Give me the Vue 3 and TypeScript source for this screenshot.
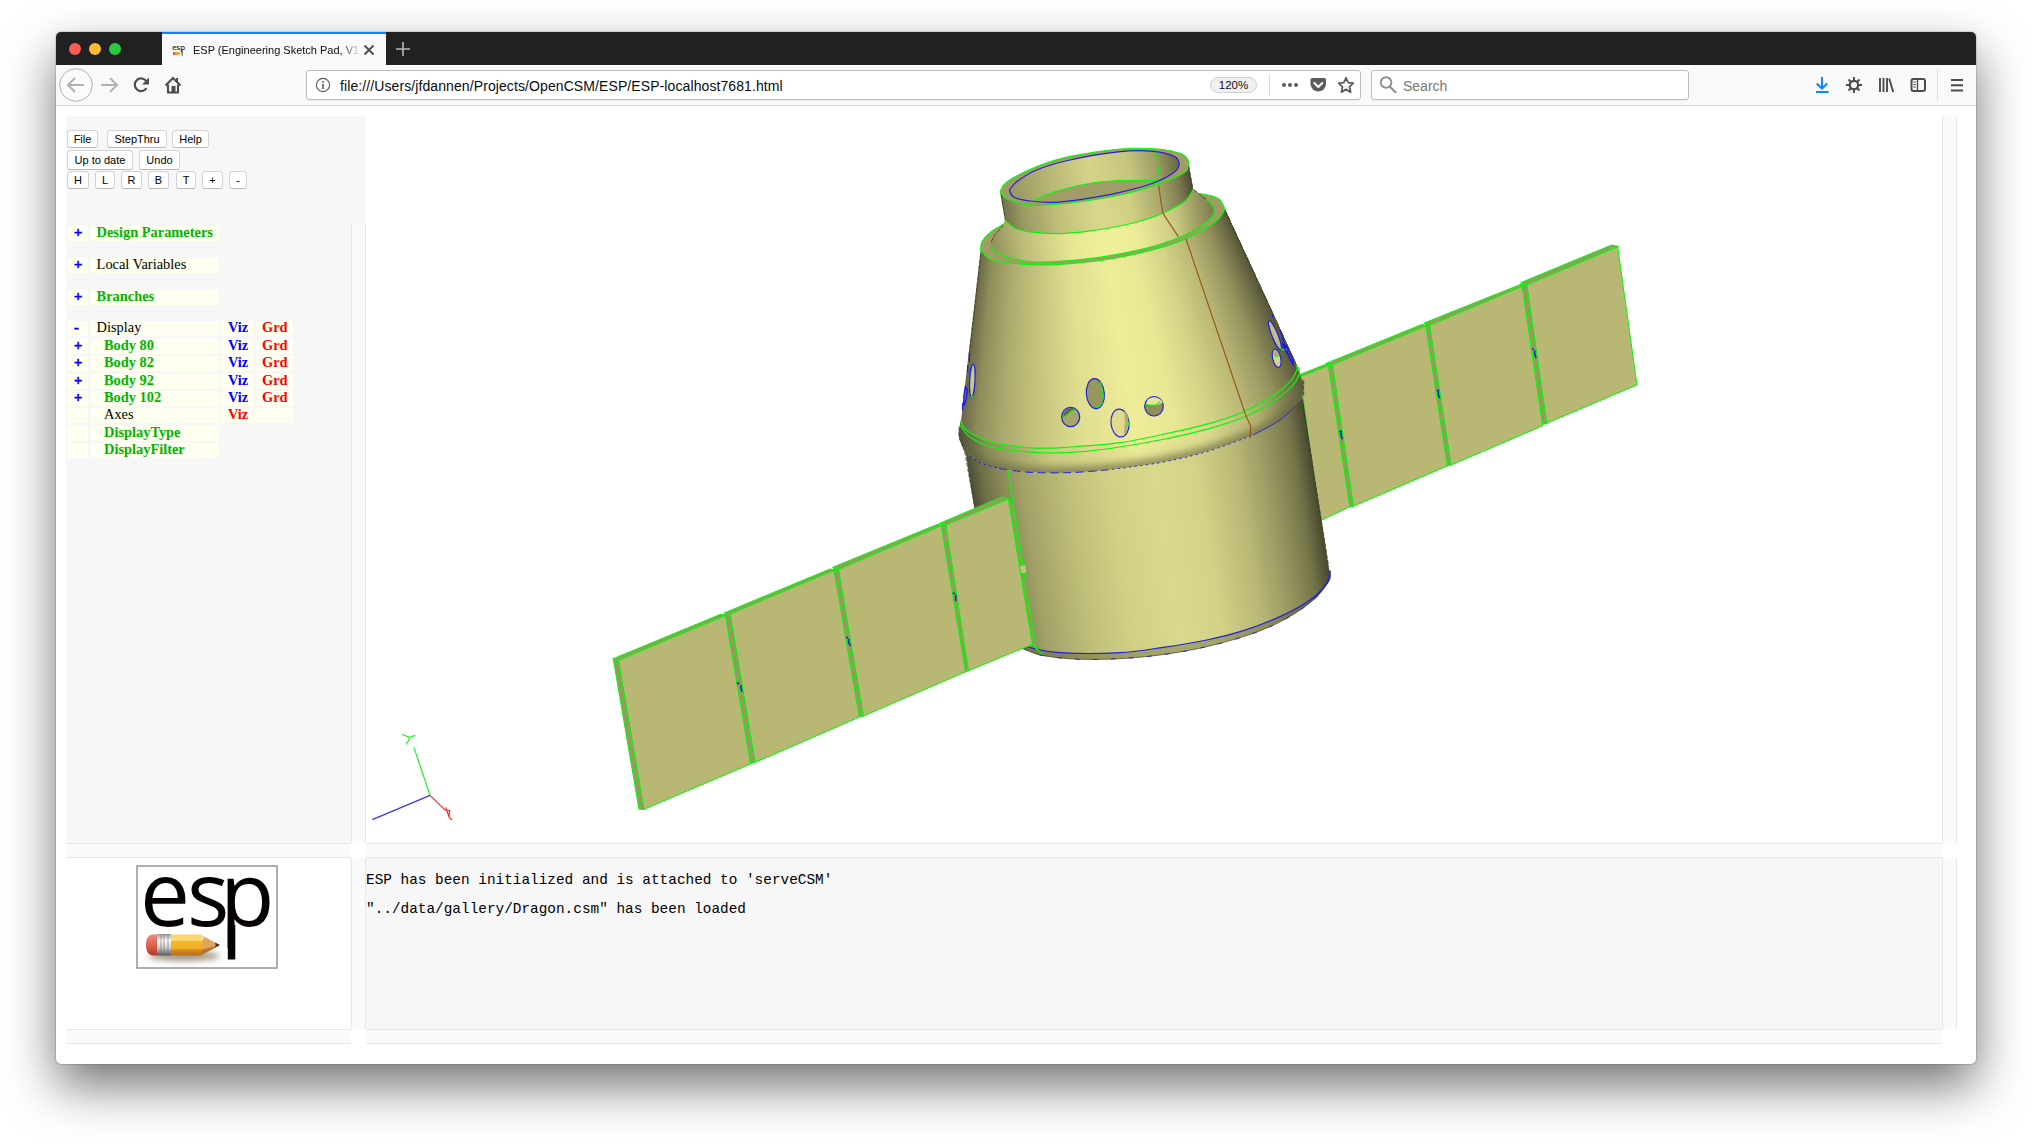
<script setup lang="ts">
type Pt = [number, number]

interface Row {
  sign: string
  label: string
  link?: boolean
  indent?: boolean
  group?: boolean
  viz?: string
  grd?: boolean
}

const buttonRows: { cls: string; items: { t: string; w: number; gap: number }[] }[] = [
  { cls: 'r1', items: [{ t: 'File', w: 31, gap: 0 }, { t: 'StepThru', w: 60, gap: 9 }, { t: 'Help', w: 37, gap: 5 }] },
  { cls: 'r2', items: [{ t: 'Up to date', w: 66, gap: 0 }, { t: 'Undo', w: 41, gap: 6 }] },
  {
    cls: 'r3',
    items: [
      { t: 'H', w: 22, gap: 0 }, { t: 'L', w: 20, gap: 6 }, { t: 'R', w: 21, gap: 6 }, { t: 'B', w: 21, gap: 6 },
      { t: 'T', w: 20, gap: 7 }, { t: '+', w: 21, gap: 6 }, { t: '-', w: 18, gap: 6 },
    ],
  },
]

const rows: Row[] = [
  { sign: '+', label: 'Design Parameters', link: true },
  { sign: '+', label: 'Local Variables', group: true },
  { sign: '+', label: 'Branches', link: true, group: true },
  { sign: '-', label: 'Display', group: true, viz: 'on', grd: true },
  { sign: '+', label: 'Body 80', link: true, indent: true, viz: 'on', grd: true },
  { sign: '+', label: 'Body 82', link: true, indent: true, viz: 'on', grd: true },
  { sign: '+', label: 'Body 92', link: true, indent: true, viz: 'on', grd: true },
  { sign: '+', label: 'Body 102', link: true, indent: true, viz: 'on', grd: true },
  { sign: '', label: 'Axes', indent: true, viz: 'off' },
  { sign: '', label: 'DisplayType', link: true, indent: true },
  { sign: '', label: 'DisplayFilter', link: true, indent: true },
]

// Smooth path through a list of points (Catmull-Rom to cubic Bezier)
function segs(p: Pt[]): string {
  let d = ''
  for (let i = 0; i < p.length - 1; i++) {
    const a = p[Math.max(0, i - 1)], b = p[i], c = p[i + 1], e = p[Math.min(p.length - 1, i + 2)]
    d += `C${(b[0] + (c[0] - a[0]) / 6).toFixed(1)} ${(b[1] + (c[1] - a[1]) / 6).toFixed(1)} ${(c[0] - (e[0] - b[0]) / 6).toFixed(1)} ${(c[1] - (e[1] - b[1]) / 6).toFixed(1)} ${c[0]} ${c[1]}`
  }
  return d
}
const curve = (p: Pt[]) => `M${p[0][0]} ${p[0][1]}` + segs(p)
const join = (...parts: Pt[][]) =>
  parts.map((p, i) => `${i ? 'L' : 'M'}${p[0][0]} ${p[0][1]}` + segs(p)).join('') + 'Z'
const rev = (p: Pt[]) => [...p].reverse()

const rimTopBack: Pt[] = [[240, 185], [262, 155], [350, 110], [450, 79], [600, 57], [715, 57], [780, 70], [802, 86], [806, 103]]
const rimTopFront: Pt[] = [[806, 103], [795, 126], [720, 160], [600, 195], [450, 219], [340, 226], [262, 207], [240, 185]]
const boreBack: Pt[] = [[268, 180], [290, 155], [350, 120], [450, 90], [600, 65], [700, 64], [765, 80], [778, 103]]
const boreFront: Pt[] = [[778, 103], [765, 125], [700, 159], [600, 187], [480, 209], [400, 217], [330, 213], [282, 202], [268, 180]]
const floorArc: Pt[] = [[342, 212], [400, 187], [500, 162], [600, 152], [722, 151]]
const neckBase: Pt[] = [[255, 270], [290, 297], [350, 308], [420, 311], [500, 304], [600, 288], [700, 261], [790, 217], [820, 178]]
const shoulderIn: Pt[] = [[250, 285], [222, 318], [212, 345], [230, 368], [280, 387], [350, 396], [450, 392], [570, 377], [700, 349], [800, 313], [870, 267], [883, 240], [868, 215], [820, 178]]
const shoulderFront: Pt[] = [[182, 360], [210, 387], [270, 399], [365, 405], [450, 401], [570, 387], [700, 359], [800, 325], [885, 276], [912, 243], [914, 236]]
const shoulderLeft: Pt[] = [[182, 362], [186, 335], [210, 308], [252, 282]]
const shoulderRight: Pt[] = [[914, 236], [900, 210], [872, 197], [832, 190]]
const ringIn: Pt[] = [[122, 872], [132, 893], [160, 915], [220, 938], [340, 954], [450, 951], [600, 938], [720, 915], [870, 880], [970, 846], [1060, 797], [1110, 755], [1130, 722], [1130, 705]]
const ringOut: Pt[] = [[120, 885], [150, 921], [210, 950], [340, 967], [450, 967], [560, 957], [720, 930], [870, 895], [980, 858], [1060, 815], [1115, 770], [1138, 732], [1134, 710]]
const ringBase: Pt[] = [[136, 968], [180, 998], [240, 1016], [330, 1027], [450, 1028], [560, 1020], [720, 998], [860, 965], [1000, 915], [1080, 870], [1146, 810]]
const baseOut: Pt[] = [[308, 1555], [360, 1575], [460, 1587], [580, 1587], [720, 1575], [860, 1550], [1000, 1510], [1100, 1465], [1180, 1410], [1225, 1355], [1230, 1322]]
const baseIn: Pt[] = [[323, 1551], [420, 1568], [600, 1568], [730, 1552], [860, 1530], [970, 1502], [1080, 1460], [1170, 1410], [1220, 1360], [1230, 1322]]

const conePath = join([[182, 360], [127, 840], [122, 872]], ringIn, [[1130, 705], [914, 236]], rev(shoulderFront))
const neckPath = join([[240, 185], [255, 270]], neckBase, [[820, 178], [806, 103]], rimTopFront)
const shoulderPath = join(neckBase, rev(shoulderIn))
const rimPath = join(shoulderLeft, [[252, 282], [832, 190]], rev(shoulderRight), rev(shoulderFront))
const ringPath = join([[122, 872], [117, 920], [136, 968]], ringBase, [[1146, 810], [1151, 765], [1140, 735], [1130, 705]], rev(ringIn))
const bodyPath = join([[136, 960], [166, 1150], [235, 1520], [308, 1555]], baseOut, [[1230, 1322], [1226, 1310], [1148, 800]], rev(ringBase))

// Shaded cone: thin wedges between the two slanted silhouettes
const stops: [number, number[]][] = [
  [0, [104, 103, 70]], [0.05, [142, 141, 91]], [0.13, [172, 171, 110]], [0.23, [197, 196, 126]],
  [0.36, [225, 223, 144]], [0.5, [238, 236, 153]], [0.61, [232, 231, 148]], [0.71, [212, 211, 135]],
  [0.81, [184, 183, 117]], [0.9, [148, 147, 94]], [0.96, [112, 111, 72]], [1, [84, 84, 56]],
]
function shade(t: number): string {
  let i = 1
  while (i < stops.length - 1 && stops[i][0] < t) i++
  const [t0, c0] = stops[i - 1], [t1, c1] = stops[i]
  const k = Math.min(1, Math.max(0, (t - t0) / (t1 - t0)))
  return `rgb(${c0.map((v, j) => Math.round(v + (c1[j] - v) * k)).join(',')})`
}
const N = 130
const wedges = Array.from({ length: N }, (_, i) => {
  const at = (t: number, s: number): string => {
    const tx = 182 + 733 * t, ty = 362 - 125 * t
    const bx = 124 + 1010 * t, by = 880 - 165 * t
    return `${(tx + (bx - tx) * s).toFixed(1)},${(ty + (by - ty) * s).toFixed(1)}`
  }
  const t = i === 0 ? -0.08 : i / N
  return { pts: [at(t, -0.4), at(1.08, -0.4), at(1.08, 1.4), at(t, 1.4)].join(' '), fill: shade((i + 0.5) / N) }
})

const leftWing = {
  faces: ['55,600 378,465 452,912 132,1048', '390,460 705,328 779,771 465,907', '715,327 1025,195 1097,635 790,768', '1037,194 1225,117 1297,553 1105,632'],
  sides: ['40,597 55,600 132,1049 117,1047', '375,460 390,460 465,907 452,910', '701,326 715,326 790,768 778,770', '1023,193 1037,193 1105,632 1097,635'],
  tops: ['40,596 362,463 378,465 55,601', '375,458 690,327 705,329 390,462', '699,322 1013,193 1026,196 715,328', '1020,190 1205,111 1225,116 1037,195'],
  marks: ['M410 670h8M423 675v10l3 10', 'M738 533h6M746 536v10l5 12', 'M1058 400h7M1067 404v20'],
}
const rightWing = {
  faces: ['120,440 205,405 270,830 180,872', '217,404 500,285 565,706 280,829', '508,284 787,168 848,587 573,705', '800,164 1073,50 1131,465 860,580'],
  sides: ['205,402 217,402 280,829 270,830', '497,284 508,282 573,705 562,707', '786,162 800,162 860,580 848,583'],
  tops: ['118,434 200,402 212,404 122,440', '200,400 485,284 502,286 217,404', '493,279 783,163 790,167 508,286', '783,158 1055,45 1073,49 800,164'],
  marks: ['M238 604h5v12l4 12', 'M530 481h5v12l4 12', 'M816 357h6M824 361v10l4 13'],
}
</script>

<template>
  <div class="desktop">
    <div class="window">
      <div class="tabbar">
        <div class="lights"><i class="red"></i><i class="yellow"></i><i class="green"></i></div>
        <div class="tab">
          <svg class="fav" viewBox="0 0 16 16" width="16" height="16">
            <rect x="1" y="1" width="14" height="13" rx="1" fill="#fff" stroke="#e4e4e4" stroke-width=".6" />
            <text x="1.2" y="8" textLength="13" lengthAdjust="spacingAndGlyphs">esp</text>
            <rect x="2" y="10" width="7" height="3" rx="1.3" fill="#e9a32a" />
            <rect x="2" y="10" width="2" height="3" rx="1" fill="#d9563f" />
            <path d="M11.1 7v6.500" stroke="#222" stroke-width="1" />
          </svg>
          <span class="title">ESP (Engineering Sketch Pad, V1</span>
          <svg class="close" viewBox="0 0 12 12" width="12" height="12"><path d="M1.5 1.5l9 9M10.5 1.5l-9 9" stroke="#4c4c4c" stroke-width="1.8" /></svg>
        </div>
        <svg class="plus" viewBox="0 0 14 14" width="14" height="14"><path d="M7 0v14M0 7h14" stroke="#b8b8b8" stroke-width="1.6" /></svg>
      </div>

      <div class="nav">
        <div class="left">
          <svg viewBox="58 68 130 34" width="130" height="34" fill="none">
            <circle cx="76" cy="85" r="16.3" fill="#fbfbfb" stroke="#b1b1b1" />
            <path d="M84 85H69M75 78l-7 7 7 7" stroke="#b1b1b1" stroke-width="2" />
            <path d="M101 85h15M110 78l7 7-7 7" stroke="#b1b1b1" stroke-width="2" />
            <path d="M146.3 81.2A6.3 6.3 0 1 0 146.5 88" stroke="#4c4c4c" stroke-width="2.2" />
            <path d="M149 77.5v7h-7z" fill="#4c4c4c" />
            <path d="M165.5 85.5l7.5-7.5 7.5 7.5" stroke="#4c4c4c" stroke-width="2.1" />
            <path d="M168 84.5v8h10v-8" stroke="#4c4c4c" stroke-width="2.1" />
            <path d="M171.5 93v-7h4v7z" fill="#4c4c4c" />
            <path d="M177 78v4" stroke="#4c4c4c" stroke-width="2" />
          </svg>
        </div>
        <div class="urlbar">
          <svg viewBox="0 0 16 16" width="16" height="16" fill="none"><circle cx="8" cy="8" r="6.6" stroke="#5a5a5a" stroke-width="1.1" /><path d="M8 7v5M8 4v1.7" stroke="#5a5a5a" stroke-width="1.6" /></svg>
          <span class="url">file:///Users/jfdannen/Projects/OpenCSM/ESP/ESP-localhost7681.html</span>
          <span class="zoom">120%</span>
          <span class="vsep"></span>
          <svg viewBox="1279 75 76 20" width="76" height="20" fill="none">
            <g fill="#5c5c5c"><circle cx="1284" cy="85" r="2" /><circle cx="1290" cy="85" r="2" /><circle cx="1296" cy="85" r="2" /></g>
            <path d="M1312 78h12.5a1.5 1.5 0 0 1 1.5 1.5v5a7.8 7.8 0 0 1-15.5 0v-5a1.5 1.5 0 0 1 1.5-1.5z" fill="#5c5c5c" />
            <path d="M1314.3 83l4 4 4-4" stroke="#fff" stroke-width="2" stroke-linecap="round" stroke-linejoin="round" />
            <path d="M1346 77.8l2.2 4.9 5.100 .5-3.800 3.600 1.100 5.300-4.600-2.700-4.600 2.700 1.100-5.300-3.800-3.600 5.100-.5z" stroke="#5c5c5c" stroke-width="1.8" stroke-linejoin="round" />
          </svg>
        </div>
        <div class="search">
          <svg viewBox="0 0 16 16" width="18" height="18" fill="none"><circle cx="6.3" cy="5.8" r="4.7" stroke="#8f8f8f" stroke-width="1.7" /><path d="M9.7 9.5l5 5" stroke="#8f8f8f" stroke-width="2" stroke-linecap="round" /></svg>
          <span>Search</span>
        </div>
        <svg class="tools" viewBox="1806 68 165 34" width="165" height="34" fill="none">
          <path d="M1822 77v12M1816.8 83.500l5.200 5.200 5.200-5.200M1816 92h12.5" stroke="#0a84ff" stroke-width="2" />
          <circle cx="1854" cy="85" r="4.200" stroke="#4c4c4c" stroke-width="2.200" />
          <path d="M1854 77v3.5M1854 89.5v3.5M1846 85h3.5M1858.5 85h3.5M1848.500 79.5l2.500 2.5M1857 88l2.500 2.5M1859.500 79.5l-2.500 2.500M1851 88l-2.500 2.500" stroke="#4c4c4c" stroke-width="1.900" />
          <path d="M1880 78v14M1883.5 78v14M1887 78v14M1889.200 78.500l4 13.500" stroke="#4c4c4c" stroke-width="1.900" />
          <rect x="1911.5" y="79" width="13.500" height="12" rx="2" stroke="#4c4c4c" stroke-width="2" />
          <path d="M1917.5 79v12" stroke="#4c4c4c" stroke-width="1.400" /><path d="M1913.3 82h2.500M1913.3 84.500h2.500M1913.3 87h2.500" stroke="#4c4c4c" />
          <path d="M1937.5 69v32" stroke="#e0e0e0" />
          <path d="M1951 80h12M1951 85.200h12M1951 90.500h12" stroke="#4c4c4c" stroke-width="2" />
        </svg>
      </div>

      <div class="page">
        <div class="line top">
          <div class="side">
            <div class="toolbox">
              <div v-for="r in buttonRows" :key="r.cls" class="brow" :class="r.cls">
                <button v-for="b in r.items" :key="b.t" :style="{ width: b.w + 'px', marginLeft: b.gap + 'px' }">{{ b.t }}</button>
              </div>
            </div>
            <div class="split">
              <div class="tree">
                <div v-for="r in rows" :key="r.label" class="row" :class="{ group: r.group }">
                  <span class="sign">{{ r.sign }}</span>
                  <span class="label" :class="{ link: r.link, indent: r.indent }">{{ r.label }}</span>
                  <span v-if="r.viz" class="viz" :class="r.viz">Viz</span>
                  <span v-if="r.grd" class="grd">Grd</span>
                </div>
              </div>
              <div class="vtrack"></div>
            </div>
            <div class="htrack short"></div>
          </div>

          <div class="main">
            <div class="split">
              <svg class="canvas" viewBox="366 116 1576 727" width="1576" height="727">
                <defs>
                  <linearGradient id="cyl" gradientUnits="userSpaceOnUse" x1="136" y1="965" x2="1148" y2="810">
                    <stop offset="0" stop-color="#4c4c34" /><stop offset=".04" stop-color="#6f6f49" /><stop offset=".09" stop-color="#898858" />
                    <stop offset=".15" stop-color="#a2a167" /><stop offset=".28" stop-color="#bfbf7a" /><stop offset=".42" stop-color="#d2d287" />
                    <stop offset=".54" stop-color="#d9d98c" /><stop offset=".66" stop-color="#d3d287" /><stop offset=".78" stop-color="#b9b876" />
                    <stop offset=".88" stop-color="#95945f" /><stop offset=".95" stop-color="#747449" /><stop offset="1" stop-color="#48482f" />
                  </linearGradient>
                  <linearGradient id="neck" gradientUnits="userSpaceOnUse" x1="244" y1="230" x2="812" y2="140">
                    <stop offset="0" stop-color="#6f6e48" /><stop offset=".1" stop-color="#9a9962" /><stop offset=".3" stop-color="#c3c27c" />
                    <stop offset=".5" stop-color="#d9d98c" /><stop offset=".66" stop-color="#d0d085" /><stop offset=".82" stop-color="#a9a86c" />
                    <stop offset=".93" stop-color="#7e7d50" /><stop offset="1" stop-color="#4e4d33" />
                  </linearGradient>
                  <linearGradient id="shoulder" gradientUnits="userSpaceOnUse" x1="215" y1="350" x2="880" y2="240">
                    <stop offset="0" stop-color="#919059" /><stop offset=".15" stop-color="#c0bf7a" /><stop offset=".35" stop-color="#e7e693" />
                    <stop offset=".5" stop-color="#f1f09a" /><stop offset=".65" stop-color="#eceb97" /><stop offset=".82" stop-color="#cbca82" />
                    <stop offset="1" stop-color="#7c7b4f" />
                  </linearGradient>
                  <linearGradient id="bore" gradientUnits="userSpaceOnUse" x1="268" y1="180" x2="778" y2="100">
                    <stop offset="0" stop-color="#96955f" /><stop offset=".25" stop-color="#b9b876" /><stop offset=".48" stop-color="#d5d489" />
                    <stop offset=".7" stop-color="#c7c680" /><stop offset=".86" stop-color="#a09f66" /><stop offset="1" stop-color="#66653f" />
                  </linearGradient>
                  <linearGradient id="ring" gradientUnits="userSpaceOnUse" x1="118" y1="920" x2="1150" y2="765">
                    <stop offset="0" stop-color="#504f36" /><stop offset=".07" stop-color="#8a8958" /><stop offset=".25" stop-color="#c9c880" />
                    <stop offset=".5" stop-color="#ebea96" /><stop offset=".7" stop-color="#dcdb8d" /><stop offset=".86" stop-color="#b1b071" />
                    <stop offset="1" stop-color="#5a593a" />
                  </linearGradient>
                  <filter id="soft" x="-10%" y="-20%" width="120%" height="140%"><feGaussianBlur stdDeviation="12" /></filter>
                  <clipPath id="coneClip"><path :d="conePath" /></clipPath>
                  <clipPath id="ringClip"><path :d="ringPath" /></clipPath>
                  <clipPath id="boreClip"><path :d="join(boreBack, boreFront)" /></clipPath>
                </defs>

                <g transform="translate(1260 230) scale(.33333)" class="wing">
                  <polygon v-for="p in rightWing.faces" :key="p" :points="p" class="face" />
                  <polygon v-for="p in rightWing.sides" :key="p" :points="p" class="edge" />
                  <polygon v-for="p in rightWing.tops" :key="p" :points="p" class="edge" />
                  <path v-for="p in rightWing.marks" :key="p" :d="p" class="mark" />
                </g>

                <g transform="translate(920 130) scale(.33333)" class="craft">
                  <path :d="bodyPath" fill="url(#cyl)" />
                  <path :d="join(baseIn, rev(baseOut))" fill="#36361d" fill-opacity=".3" />
                  <path :d="curve(baseIn)" class="b" />
                  <path :d="curve(baseOut)" class="k solid" />
                  <path :d="curve(baseOut)" class="b thin" stroke-dasharray="14 40" />
                  <path :d="curve(baseOut.slice(8))" class="b thin" />
                  <path :d="ringPath" fill="url(#ring)" />
                  <g clip-path="url(#ringClip)">
                    <path :d="curve(ringBase)" fill="none" stroke="#66653d" stroke-opacity=".75" stroke-width="32" filter="url(#soft)" />
                  </g>
                  <g clip-path="url(#coneClip)">
                    <polygon v-for="(w, i) in wedges" :key="i" :points="w.pts" :fill="w.fill" />
                  </g>
                  <path :d="rimPath" fill="#a19c66" />
                  <path :d="join([[250, 285], [255, 270]], [[820, 178], [883, 240]], rev(shoulderIn))" fill="url(#shoulder)" />
                  <path :d="shoulderPath" fill="url(#shoulder)" />
                  <path :d="neckPath" fill="url(#neck)" />
                  <path :d="join(rimTopBack, rimTopFront)" fill="#a19c66" />
                  <path :d="join(boreBack, boreFront)" fill="url(#bore)" />
                  <g clip-path="url(#boreClip)">
                    <path :d="curve(floorArc) + 'L760 260L300 260Z'" fill="#a19d66" />
                    <path :d="curve(floorArc)" class="g" />
                    <path d="M709 60L713 105L720 151" class="g" />
                  </g>
                  <path :d="curve(rimTopBack)" class="g" /><path :d="curve(rimTopFront)" class="g" />
                  <path :d="curve(boreBack)" class="b" /><path :d="curve(boreFront)" class="b" />
                  <path :d="curve(neckBase)" class="g" /><path :d="curve(shoulderIn.slice(2, 12))" class="g" />
                  <path d="M883 240L872 219L858 208" class="g" />
                  <path d="M858 208L820 178M214 335L222 318L250 285" class="k" />
                  <path :d="curve(shoulderFront)" class="g" /><path :d="curve(shoulderLeft)" class="g" /><path :d="curve(shoulderRight)" class="g" />
                  <path :d="curve(ringIn)" class="g" /><path :d="curve(ringOut)" class="g" />
                  <path :d="curve(ringBase.slice(0, 3))" class="b thin" stroke-dasharray="9 7" />
                  <path :d="curve(ringBase.slice(2, 6))" class="b thin" stroke-dasharray="24 14" />
                  <path :d="curve(ringBase.slice(5, 9))" class="b thin" stroke-dasharray="6 11" />
                  <path :d="curve(ringBase.slice(8))" class="b thin" />
                  <path d="M182 372L166 520L148 670M806 108L818 176M244 195L256 268M916 245L1058 552M117 890V922L133 962M134 965L166 1140M1151 750V800M1148 820L1226 1310" class="k" />
                  <path d="M716 165L722 210L729 250L745 275L775 320M798 327L978 858L992 888L990 925" fill="none" stroke="#98581f" stroke-width="3.6" />

                  <g class="hole">
                    <ellipse cx="452" cy="861" rx="27" ry="29" fill="#a8a66b" />
                    <path d="M431 850Q438 836 456 834L466 837L430 862Z" class="dark" />
                    <path d="M430 863L456 842L466 838" class="g" />
                    <ellipse cx="526" cy="791" rx="27" ry="45" fill="#98965f" transform="rotate(-5 526 791)" />
                    <path d="M541 757Q551 790 549 808M524 830L538 829L548 818" class="g" />
                    <ellipse cx="600" cy="879" rx="27" ry="42" fill="#deda8e" transform="rotate(-6 600 879)" />
                    <path d="M622 850Q628 880 620 908L610 914Q618 880 612 844Z" class="mid" />
                    <path d="M626 874v14" class="g" />
                    <ellipse cx="702" cy="829" rx="28" ry="29" fill="#8f8d58" />
                    <path d="M677 824Q680 803 702 802Q724 804 728 818L712 826L686 825Z" class="light" />
                    <path d="M678 822L686 825H710L721 814" class="g" />
                    <ellipse cx="1065" cy="616" rx="9" ry="47" fill="#c2bf80" transform="rotate(-22 1065 616)" />
                    <ellipse cx="1070" cy="685" rx="12" ry="28" fill="#d7d38c" transform="rotate(-13 1070 685)" />
                    <path d="M1060 668L1068 661L1078 678H1062Z" class="mid" />
                    <path d="M1062 678H1078M1078 652L1088 660L1100 658" class="g" />
                    <ellipse cx="157" cy="752" rx="8" ry="49" fill="#cbc884" transform="rotate(3 157 752)" />
                    <path d="M1058 553V562M1079 600L1092 628M1087 625L1099 655L1086 640L1096 660L1120 706L1117 683L1098 644M1099 660L1112 692" />
                    <path d="M148 668V695M143 705V728M136 770L131 800L133 826L140 802L142 778L136 768M128 818V842" />
                    <path d="M152 800H160" class="g" />
                  </g>
                  <path d="M263 1018L310 1310" class="g" />
                </g>

                <g transform="translate(600 460) scale(.33333)" class="wing">
                  <polygon points="1225,117 1240,140 1270,318 1260,318" class="edge" />
                  <polygon points="1263,342 1272,342 1310,568 1297,553" class="edge" />
                  <polygon points="1258,317 1275,313 1279,339 1265,342" fill="#c4c37c" stroke="#00f000" stroke-width="3" stroke-dasharray="18 23" />
                  <polygon v-for="p in leftWing.faces" :key="p" :points="p" class="face" />
                  <polygon v-for="p in leftWing.sides" :key="p" :points="p" class="edge" />
                  <polygon v-for="p in leftWing.tops" :key="p" :points="p" class="edge" />
                  <path v-for="p in leftWing.marks" :key="p" :d="p" class="mark" />
                  <path d="M1310 566L1328 584" class="g" />
                </g>

                <g transform="translate(50 720) scale(.33333)" fill="none" stroke-width="3.8">
                  <path d="M1092 83L1140 226M1057 43L1078 52L1096 46M1078 52L1077 60L1068 73" stroke="#2cf02c" />
                  <path d="M967 299L1140 226" stroke="#3636f5" />
                  <path d="M1140 226L1185 270L1199 272L1197 290M1187 262L1197 291L1206 300" stroke="#ff3030" />
                </g>
              </svg>
              <div class="vtrack"></div>
            </div>
            <div class="htrack"></div>
          </div>
        </div>

        <div class="line bottom">
          <div class="side">
            <div class="split">
              <div class="logo">
                <svg viewBox="0 0 142 104" width="142" height="104">
                  <defs>
                    <linearGradient id="wood" x1="0" y1="0" x2="0" y2="1">
                      <stop offset="0" stop-color="#f9d465" /><stop offset=".28" stop-color="#fbdc78" /><stop offset=".3" stop-color="#f5b92c" />
                      <stop offset=".7" stop-color="#eeae22" /><stop offset=".72" stop-color="#d48a22" /><stop offset="1" stop-color="#b86f1c" />
                    </linearGradient>
                    <linearGradient id="rubber" x1="0" y1="0" x2="0" y2="1"><stop offset="0" stop-color="#f08d7c" /><stop offset=".5" stop-color="#e0604d" /><stop offset="1" stop-color="#b03a2c" /></linearGradient>
                    <linearGradient id="metal" x1="0" y1="0" x2="0" y2="1"><stop offset="0" stop-color="#999" /><stop offset=".3" stop-color="#fff" /><stop offset=".65" stop-color="#ccc" /><stop offset="1" stop-color="#555" /></linearGradient>
                    <filter id="drop" x="-20%" y="-100%" width="140%" height="300%"><feGaussianBlur stdDeviation="3" /></filter>
                  </defs>
                  <rect x="1" y="1" width="140" height="102" fill="#fff" stroke="#989da1" stroke-width="1.6" />
                  <ellipse cx="48" cy="91" rx="36" ry="4.5" fill="#554326" fill-opacity=".6" filter="url(#drop)" />
                  <text class="letters" x="4 51 84" y="61">esp</text>
                  <rect x="91.8" y="60" width="7.5" height="34.5" fill="#050101" />
                  <path d="M21 69.5h-5q-6 1-6 10.5t6 10.5h5z" fill="url(#rubber)" />
                  <rect x="21" y="69" width="14" height="21.5" fill="url(#metal)" />
                  <path d="M25 69v21M28 69v21M32 69v21" stroke="#777" stroke-width=".7" />
                  <path d="M35 69.5H65L69 80L65 90.5H35Z" fill="url(#wood)" />
                  <path d="M64 69.5L84 80L65 90.5Q70 85 66 84.500Q69 80 66 76Q70 73 64 69.500Z" fill="#dfa662" />
                  <path d="M66 84.5L84 80L65 90.5Z" fill="#b8743a" />
                  <path d="M79 77.5L84 80L79 82.5Q80.5 80 79 77.5Z" fill="#333" />
                </svg>
              </div>
              <div class="vtrack"></div>
            </div>
            <div class="htrack short"></div>
          </div>
          <div class="main">
            <div class="split">
              <div class="console">
                <div>ESP has been initialized and is attached to 'serveCSM'</div>
                <div>"../data/gallery/Dragon.csm" has been loaded</div>
              </div>
              <div class="vtrack"></div>
            </div>
            <div class="htrack"></div>
          </div>
        </div>
      </div>
    </div>
  </div>
</template>

<style>
body { background: #fff; }
</style>

<style scoped>
* { box-sizing: border-box; }
.desktop { width: 2032px; height: 1144px; padding: 32px 56px 80px; overflow: hidden; font-family: "Liberation Sans", Arial, sans-serif; }
.window { width: 1920px; height: 1032px; background: #fff; border-radius: 5px; box-shadow: 0 22px 50px rgba(0, 0, 0, .55), 0 0 1.5px rgba(0, 0, 0, .6); }
.tabbar { display: flex; align-items: center; height: 33px; background: #212121; border-radius: 5px 5px 0 0; }
.lights { display: flex; gap: 8px; width: 106px; padding-left: 13px; }
.lights i { width: 12px; height: 12px; border-radius: 50%; }
.red { background: #fc5a52; }
.yellow { background: #fdbc2f; }
.green { background: #28ca42; }
.tab { display: flex; align-items: center; width: 224px; height: 33px; padding-left: 9px; border-top: 2px solid #0a84ff; background: #f9f9fa; }
.fav { flex: none; margin-right: 6px; }
.fav text { font: 8px "Open Sans", sans-serif; fill: #222; stroke: #222; stroke-width: .2; }
.title { width: 165px; overflow: hidden; font-size: 11px; line-height: 16px; white-space: nowrap; color: #0c0c0d; mask-image: linear-gradient(to right, #000 148px, transparent 168px); }
.close { margin-left: 5px; }
.plus { margin-left: 10px; }
.nav { display: flex; align-items: center; height: 41px; background: #f9f9fa; border-bottom: 1px solid #dcdcdc; }
.left { width: 250px; height: 34px; padding-left: 2px; }
.urlbar, .search { display: flex; align-items: center; height: 30px; border: 1px solid #bcbcbc; border-radius: 3px; background: #fff; box-shadow: 0 1px 2px rgba(0, 0, 0, .06); }
.urlbar { width: 1055px; padding-left: 8px; }
.url { flex: 1; margin-left: 9px; padding-top: 1px; font-size: 14px; letter-spacing: .095px; color: #0c0c0d; }
.zoom { width: 47px; height: 16px; border: 1px solid #cfcfcf; border-radius: 8px; background: #f0f0f0; font-size: 11.5px; line-height: 14px; text-align: center; color: #111; }
.vsep { width: 1px; height: 22px; margin: 0 9px 0 12px; background: #d8d8d8; }
.urlbar svg:last-child { margin-right: 5px; }
.search { width: 318px; margin-left: 10px; padding-left: 7px; }
.search span { margin-left: 6px; padding-top: 1px; font-size: 14px; color: #777; }
.tools { margin-left: 117px; }
.page { padding: 10px 0 0 10px; }
.line { display: flex; }
.side { width: 300px; }
.main { width: 1591px; }
.split { display: flex; }
.toolbox { height: 108px; padding: 14px 0 0 1px; background: #f7f7f7; }
.brow { display: flex; }
.brow button { height: 18px; padding: 0; border: 1px solid #d2d2d2; border-bottom-color: #b9b9b9; border-radius: 3.5px; background: #fff; font: 11px/16px "Liberation Sans", Arial, sans-serif; color: #000; white-space: nowrap; }
.r2 { margin-top: 2px; }
.r2 button { height: 20px; line-height: 18px; }
.r3 { margin-top: 1px; }
.tree { display: flex; flex-direction: column; gap: 2.4px; width: 285px; height: 619px; padding: 2px 0 0 2px; background: #f7f7f7; font: 14.4px/12.6px "Liberation Serif", "Times New Roman", serif; }
.row { display: flex; height: 15px; }
.row.group { margin-top: 14.4px; }
.row span { height: 15px; background: #ffffef; }
.sign { width: 20px; padding-left: 6px; font-weight: bold; color: #00f; -webkit-text-stroke: .6px #00f; }
.label { width: 128px; margin-left: 3px; padding-left: 5.6px; color: #000; white-space: nowrap; }
.label.indent { padding-left: 13px; }
.label.link { font-weight: bold; color: #00b400; }
.viz { width: 32px; margin-left: 2px; padding-left: 7px; font-weight: bold; color: #00f; }
.viz.off { width: 72px; color: #f00; }
.grd { width: 37px; margin-left: 3px; padding-left: 6px; font-weight: bold; color: #f00; }
.vtrack { width: 15px; border: solid #e7e7e7; border-width: 0 1px; background: #fafafa; }
.htrack { width: 1576px; height: 15px; border: solid #e7e7e7; border-width: 1px 0; background: #fafafa; }
.htrack.short { width: 285px; }
.canvas { display: block; background: #fff; }
.logo { display: flex; width: 285px; height: 171px; padding: 7px 0 0 70px; }
.logo svg { overflow: visible; }
.letters { font: 89px "Open Sans", "Noto Sans", sans-serif; fill: #050101; }
.console { width: 1576px; height: 171px; padding-top: 14px; background: #f7f7f7; font: 14.4px/17px "Liberation Mono", "Courier New", monospace; color: #000; white-space: pre; }
.console div + div { margin-top: 12px; }
.g { fill: none; stroke: #0cf50c; stroke-width: 3.6; }
.b { fill: none; stroke: #2222dd; stroke-width: 3.6; }
.b.thin { stroke-width: 3; }
.k { fill: none; stroke: #3c3b28; stroke-width: 2.5; stroke-dasharray: 12 5; }
.k.solid { stroke-width: 2; stroke-dasharray: none; }
.hole > ellipse { stroke: #2222dd; stroke-width: 3.6; }
.hole > path { fill: none; stroke: #1414ff; stroke-width: 3.6; }
.hole > path.g { stroke: #0cf50c; }
.hole > path.dark { fill: #66653f; stroke: none; }
.hole > path.mid { fill: #b0ae70; stroke: none; }
.hole > path.light { fill: #e6e39a; stroke: none; }
.face { fill: #b8b874; stroke: #0cf50c; stroke-width: 3.2; }
.edge { fill: #9b9763; stroke: #0cf50c; stroke-width: 3.4; }
.mark { fill: none; stroke: #1430c8; stroke-width: 5; }
</style>
